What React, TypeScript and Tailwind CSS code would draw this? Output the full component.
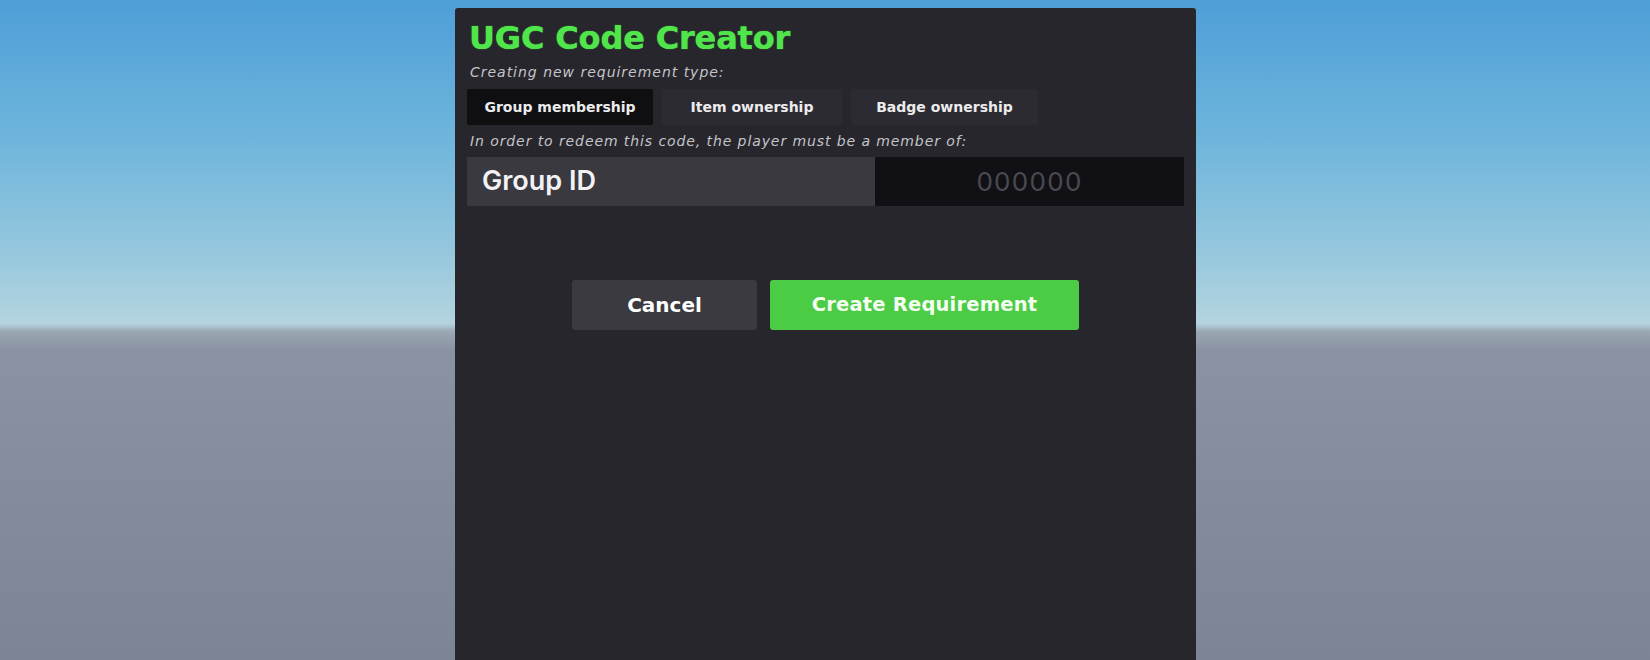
const tabs = [
  { label: "Group membership", width: "w-[186px]", active: true },
  { label: "Item ownership", width: "w-[180px]", active: false },
  { label: "Badge ownership", width: "w-[187px]", active: false },
];

export default function App() {
  return (
    <div className="h-[660px] w-full overflow-hidden bg-[linear-gradient(to_bottom,#4e9ed7_0%,#6cb4dc_20%,#95c7dd_38%,#b4d4df_49%,#9aa6b2_50.3%,#8a93a3_53%,#838c9c_75%,#7c8595_100%)] font-['DejaVu_Sans','Noto_Sans',sans-serif]">
      <div className="ml-[455px] mt-[8px] h-[680px] w-[741px] rounded-t-[3px] bg-[#27262c] px-[12px] pt-[12px]">
        <h1 className="ml-[2px] text-[32px] leading-[36px] font-bold tracking-[-0.005em] text-[#50e64b] [text-shadow:0_0_1px_#50e64b]">
          UGC Code Creator
        </h1>
        <p className="mt-[7px] ml-[3px] text-[14px] leading-[18px] italic tracking-[0.07em] text-[#c4c4c9]">
          Creating new requirement type:
        </p>

        <div className="mt-[8px] flex gap-[9px]">
          {tabs.map((tab) => (
            <button
              key={tab.label}
              className={`flex h-[36px] ${tab.width} items-center justify-center rounded-[2px] text-[14px] font-bold text-[#ececee] ${
                tab.active ? "bg-[#0f0f12]" : "bg-[#2c2b31]"
              }`}
            >
              {tab.label}
            </button>
          ))}
        </div>

        <p className="mt-[7px] ml-[3px] text-[14px] leading-[18px] italic tracking-[0.065em] text-[#c4c4c9]">
          In order to redeem this code, the player must be a member of:
        </p>

        <div className="mt-[7px] flex h-[49px] w-[717px]">
          <div className="flex w-[408px] items-center bg-[#3a3940] pl-[15px] font-['Inter',sans-serif] text-[27px] font-semibold text-[#f2f2f4]">
            Group ID
          </div>
          <div className="flex flex-1 items-center justify-center bg-[#111115] font-['Inter',sans-serif] text-[26px] tracking-[0.05em] text-[#4a4a51]">
            000000
          </div>
        </div>

        <div className="mt-[74px] flex justify-center gap-[13px]">
          <button className="h-[50px] w-[185px] rounded-[3px] bg-[#3b3a40] text-[20px] font-bold text-white">
            Cancel
          </button>
          <button className="h-[50px] w-[309px] rounded-[3px] bg-[#4ccb45] text-[19.5px] font-bold tracking-[0.01em] text-[#f4fff2]">
            Create Requirement
          </button>
        </div>
      </div>
    </div>
  );
}
